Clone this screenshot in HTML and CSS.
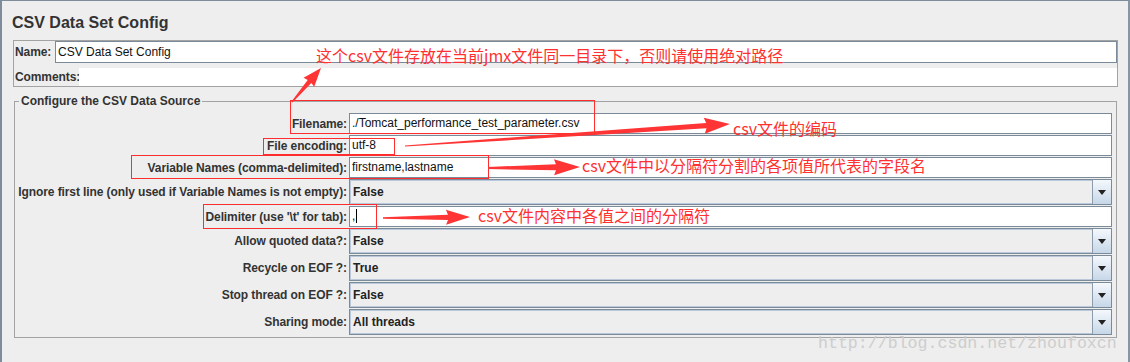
FILE: index.html
```html
<!DOCTYPE html>
<html lang="zh-CN">
<head>
  <meta charset="UTF-8">
  <title>CSV Data Set Config</title>
  <link rel="stylesheet" href="styles.css">
</head>
<body>

<div class="frame">
  <h1 class="title">CSV Data Set Config</h1>

  <div class="name-panel">
    <div class="name-row">
      <label class="name-label">Name:</label>
      <div class="text-field">CSV Data Set Config</div>
    </div>
    <div class="comments-row">
      <label class="comments-label">Comments:</label>
      <div class="comments-area"></div>
    </div>
  </div>

  <fieldset class="source">
    <legend>Configure the CSV Data Source</legend>
    <div class="form-grid">
      <label>Filename:</label>
      <div class="text-field">./Tomcat_performance_test_parameter.csv</div>

      <label>File encoding:</label>
      <div class="text-field">utf-8</div>

      <label>Variable Names (comma-delimited):</label>
      <div class="text-field">firstname,lastname</div>

      <label>Ignore first line (only used if Variable Names is not empty):</label>
      <div class="combo"><span class="combo-value">False</span><span class="combo-btn"><span class="tri"></span></span></div>

      <label>Delimiter (use '\t' for tab):</label>
      <div class="text-field">,<span class="caret"></span></div>

      <label>Allow quoted data?:</label>
      <div class="combo"><span class="combo-value">False</span><span class="combo-btn"><span class="tri"></span></span></div>

      <label>Recycle on EOF ?:</label>
      <div class="combo"><span class="combo-value">True</span><span class="combo-btn"><span class="tri"></span></span></div>

      <label>Stop thread on EOF ?:</label>
      <div class="combo"><span class="combo-value">False</span><span class="combo-btn"><span class="tri"></span></span></div>

      <label>Sharing mode:</label>
      <div class="combo"><span class="combo-value">All threads</span><span class="combo-btn"><span class="tri"></span></span></div>
    </div>
  </fieldset>

  <!-- annotations drawn over the screenshot -->
  <div class="notes">
    <svg class="marks" width="1130" height="362" viewBox="0 0 1130 362">
      <g fill="none" stroke="#ff2d2d" stroke-width="1">
        <rect x="290.5" y="100.5" width="304" height="33"/>
        <rect x="263.5" y="138.5" width="131" height="16"/>
        <rect x="131.5" y="155.5" width="357" height="23"/>
        <rect x="203.5" y="204.5" width="173" height="24"/>
      </g>
      <g fill="#ff3434">
        <polygon transform="translate(292 102) rotate(-49.5)" points="0,-0.6 27,-2.4 26,-7 44.7,0 26,7 27,2.4 0,0.6"/>
        <polygon transform="translate(405 146) rotate(-3.87)" points="0,-0.6 302,-2.6 300,-8 325.7,0 300,8 302,2.6 0,0.6"/>
        <polygon transform="translate(488 168) rotate(-0.6)" points="0,-1 68,-3 66,-8 92,0 66,8 68,3 0,1"/>
        <polygon transform="translate(383 218) rotate(-0.6)" points="0,-0.8 65,-2.6 63,-7.5 87,0 63,7.5 65,2.6 0,0.8"/>
      </g>
    </svg>
    <span class="note note-path">这个csv文件存放在当前jmx文件同一目录下，否则请使用绝对路径</span>
    <span class="note note-enc">csv文件的编码</span>
    <span class="note note-vars">csv文件中以分隔符分割的各项值所代表的字段名</span>
    <span class="note note-delim">csv文件内容中各值之间的分隔符</span>
    <span class="watermark">http://blog.csdn.net/zhoufoxcn</span>
  </div>
</div>

</body>
</html>
```

FILE: styles.css
```css
body { margin: 0; background: #eeeeee; font-family: "Liberation Sans", Arial, sans-serif; font-size: 12px; color: #333; }

.frame { position: relative; width: 1130px; height: 362px; box-sizing: border-box; background: #eeeeee; border-left: 2px solid #7d8c9a; border-top: 1px solid #7d8c9a; border-right: 2px solid #8796a4; overflow: hidden; }

.title { margin: 12px 0 0 10px; font-size: 16px; line-height: 20px; font-weight: bold; color: #333; }

/* name + comments box */
.name-panel { margin: 7px 10px 0 11px; border: 1px solid #a3a3a3; padding-left: 1px; }
.name-row, .comments-row { display: flex; align-items: center; }
.name-label { width: 40px; font-weight: bold; letter-spacing: -0.1px; }
.comments-row { margin-top: 5px; }
.comments-label { width: 64px; font-weight: bold; letter-spacing: -0.1px; }
.comments-area { flex: 1; height: 18px; background: #fff; }
.name-row .text-field { flex: 1; height: 22px; line-height: 20px; }

/* CSV data source group */
.source { margin: 7px 11px 0 12px; padding: 5px 4px 2px 1px; border: 1px solid #a3a3a3; }
.source legend { margin-left: 3px; padding: 0 2px; font-weight: bold; line-height: 14px; color: #333; }

.form-grid { display: grid; grid-template-columns: 331px 1fr; column-gap: 2px; row-gap: 1px; align-items: center; }
.form-grid label { text-align: right; font-weight: bold; letter-spacing: -0.1px; white-space: nowrap; }

.text-field { height: 21px; box-sizing: border-box; border: 1px solid #7a8a99; background: #fff; padding: 0 2px; line-height: 19px; color: #111; white-space: nowrap; }
.caret { display: inline-block; width: 0; height: 14px; margin-left: 1px; border-left: 1px solid #000; vertical-align: -3px; }

.combo { height: 26px; box-sizing: border-box; display: flex; border: 1px solid #7a8a99; background: #eeeeee; }
.combo-value { flex: 1; padding-left: 2px; line-height: 22px; font-weight: bold; color: #222; border: 1px solid #b9c9db; border-right: none; }
.combo-btn { width: 18px; display: flex; align-items: center; justify-content: center; border-left: 1px solid #8c9cac; background: linear-gradient(#f4f8fc, #c7d7e8); }
.tri { width: 0; height: 0; border-top: 5px solid #222; border-left: 4.5px solid transparent; border-right: 4.5px solid transparent; }

/* annotation overlay */
.notes { position: absolute; left: -2px; top: -1px; width: 1130px; height: 362px; pointer-events: none; }
.marks { position: absolute; left: 0; top: 0; }
.note { position: absolute; font-family: "Noto Sans CJK SC", "Liberation Sans", sans-serif; font-size: 16px; line-height: 16px; color: #ff3030; white-space: nowrap; }
.note-path { left: 316px; top: 47px; }
.note-enc { left: 733px; top: 120px; }
.note-vars { left: 582px; top: 157px; }
.note-delim { left: 478px; top: 207px; }
.watermark { position: absolute; left: 818px; top: 335px; font-family: "Liberation Mono", monospace; font-size: 16.6px; line-height: 17px; color: #cdcdcd; white-space: nowrap; }
```
